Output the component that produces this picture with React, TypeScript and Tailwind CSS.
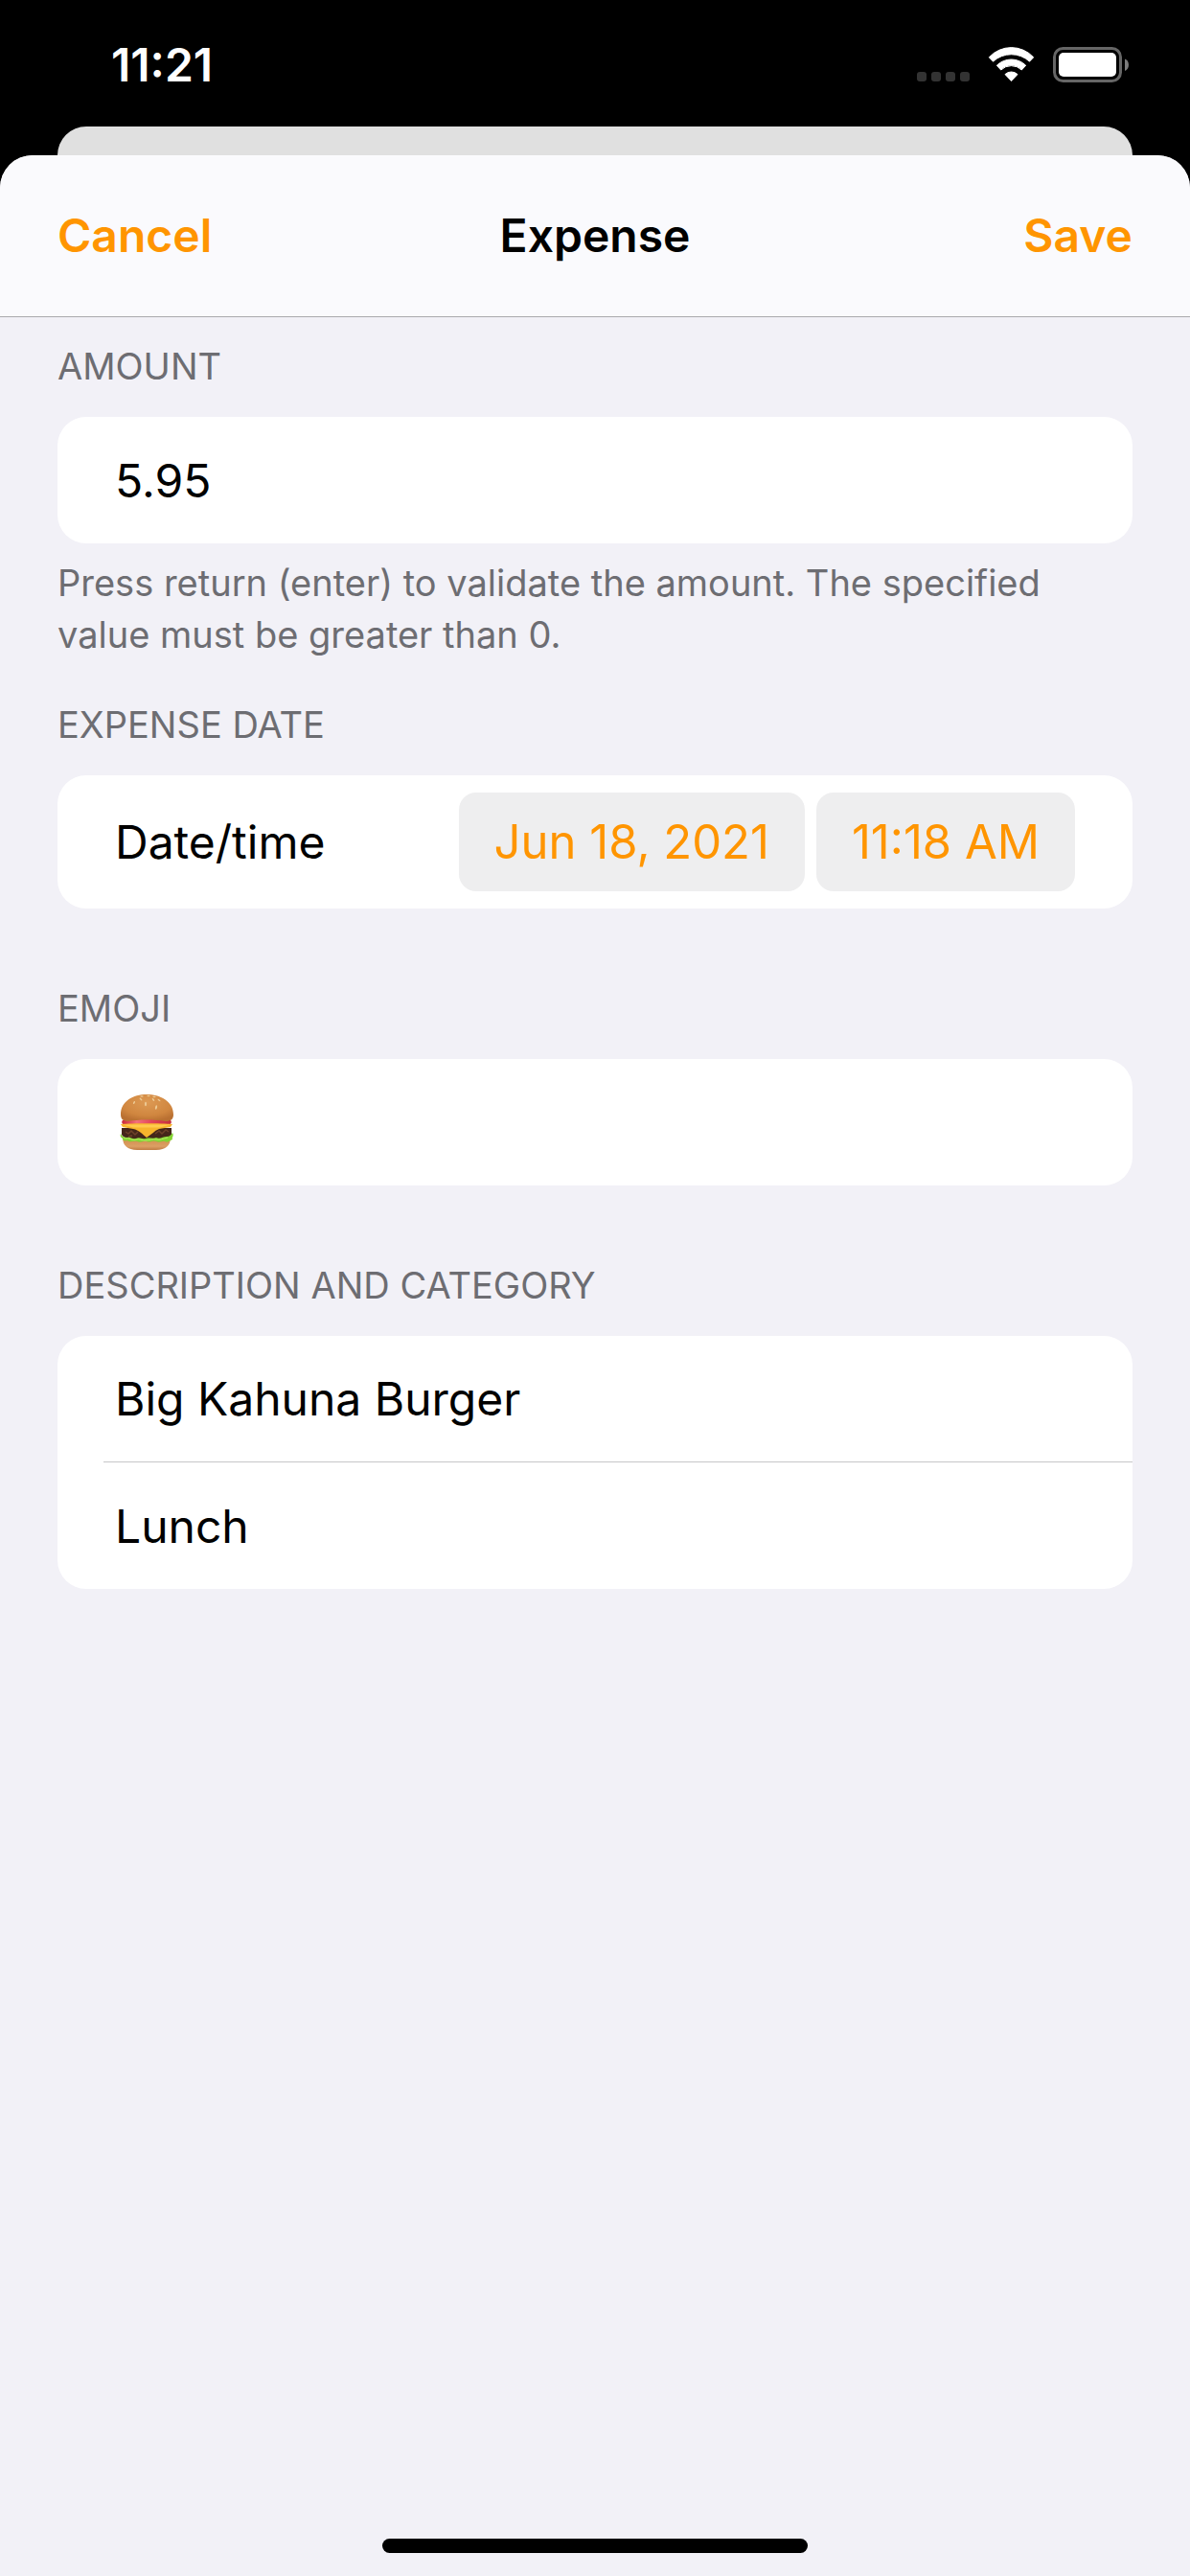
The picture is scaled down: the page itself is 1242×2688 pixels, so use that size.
import React, { useState } from 'react';

interface SectionProps {
  title: string;
  htmlFor: string;
  className?: string;
  footer?: string;
  children: React.ReactNode;
}

const StatusIcons: React.FC = () => (
  <svg width="222" height="38" viewBox="0 0 222 38" aria-hidden="true">
    <g fill="#333333">
      <rect x="0" y="26" width="10" height="10" rx="3" />
      <rect x="15" y="26" width="10" height="10" rx="3" />
      <rect x="30" y="26" width="10" height="10" rx="3" />
      <rect x="45" y="26" width="10" height="10" rx="3" />
    </g>
    <g fill="white" stroke="white" strokeWidth="1" strokeLinejoin="round" transform="translate(74.5 0)">
      <path d="M.8 10.8A31.5 31.5 0 0 1 47.2 10.8L43 15.2A28 28 0 0 0 5 15.2Z" />
      <path d="M8.8 19.3A21.5 21.5 0 0 1 39.2 19.3L34.8 24A15.5 15.5 0 0 0 13.2 24Z" />
      <path d="M17.5 28.6A9.4 9.4 0 0 1 30.5 28.6L24 35.5Z" />
    </g>
    <rect x="143.5" y="1.500" width="69" height="34" rx="9" fill="none" stroke="#666666" strokeWidth="3" />
    <rect x="148" y="6" width="60" height="25" rx="5" fill="white" />
    <path d="M217 12.5C219.6 13.4 221 15.8 221 18.7S219.6 24 217 24.9Z" fill="#7c7c7c" />
  </svg>
);

const BurgerIcon: React.FC = () => (
  <svg width="58" height="60" viewBox="0 0 58 60" aria-hidden="true">
    <defs>
      <radialGradient id="bun" cx="0.5" cy="0.3" r="0.7">
        <stop offset="0" stopColor="#dd9a54" />
        <stop offset="0.7" stopColor="#d0863f" />
        <stop offset="1" stopColor="#b97032" />
      </radialGradient>
      <linearGradient id="base" x1="0" y1="0" x2="0" y2="1">
        <stop offset="0" stopColor="#cf8c4c" />
        <stop offset="0.7" stopColor="#dc9f64" />
        <stop offset="1" stopColor="#c07c42" />
      </linearGradient>
      <linearGradient id="tomato" x1="0" y1="0" x2="1" y2="0">
        <stop offset="0" stopColor="#c9283a" />
        <stop offset="0.3" stopColor="#f2717b" />
        <stop offset="0.6" stopColor="#e2455a" />
        <stop offset="1" stopColor="#c42f3d" />
      </linearGradient>
    </defs>
    <path d="M4 46H54C54 54 49 59 39 59H19C9 59 4 54 4 46Z" fill="url(#base)" />
    <path d="M3 36H55V43C52 48 44 49 29 49S6 48 3 43Z" fill="#45261a" />
    <path d="M7 40l3 2 3-3 4 4 3-3M38 42l4-3 3 3 4-4 3 2M10 45l4-1" stroke="#6f412a" strokeWidth="1.5" fill="none" />
    <path d="M2 42C3 45 6 46 9 46C12 45 14 48 18 47C22 45 24 48 28 47C32 45 35 48 39 46C43 48 46 45 50 45C53 45 55 43 56 41C58 44 55 46 56 48C53 49 52 52 48 50C45 49 43 52 39 50C35 48 33 52 29 50C25 49 23 52 19 50C15 49 12 52 9 49C6 50 4 49 4 47C2 46 1 44 2 42Z" fill="#83d332" />
    <path d="M5 46c3 2 4 0 6 1s4 2 7 1 6 1 10 1 7-2 11-1 7-1 12-2" stroke="#b5ed63" strokeWidth="1" fill="none" />
    <path d="M4 28C8 26 50 26 54 28C56 30 54 33 51 33H7C4 33 2 30 4 28Z" fill="url(#tomato)" />
    <path d="M2 32C14 31 44 31 56 32L54 35L42 37C37 39 34 43 29 46C25 43 21 38 15 37L4 35Z" fill="#f7b52d" />
    <path d="M4 32.5H54L43 35.5H15Z" fill="#ffcb4c" />
    <path d="M2 22C2 8 15 1 29 1S57 8 57 22C57 27 54 29 49 29C36 27 21 27 10 29C5 29 2 27 2 22Z" fill="url(#bun)" />
    <g fill="#edca94">
      <ellipse cx="24" cy="3" rx="1.7" ry="0.8" />
      <ellipse cx="31" cy="2.5" rx="1.7" ry="0.8" />
      <ellipse cx="37" cy="3.5" rx="1.7" ry="0.8" />
      <ellipse cx="16" cy="9.5" rx="0.8" ry="1.6" transform="rotate(30 16 9.5)" />
      <ellipse cx="23" cy="6" rx="0.8" ry="1.8" transform="rotate(-45 23 6)" />
      <ellipse cx="36" cy="6.5" rx="0.8" ry="1.8" transform="rotate(-35 36 6.5)" />
      <ellipse cx="42" cy="7" rx="0.8" ry="1.8" transform="rotate(-50 42 7)" />
      <ellipse cx="28" cy="11" rx="1" ry="2.2" />
      <ellipse cx="39" cy="14.5" rx="1" ry="2.4" transform="rotate(12 39 14.5)" />
    </g>
  </svg>
);

const Section: React.FC<SectionProps> = ({ title, htmlFor, className = '', footer, children }) => (
  <section className={className}>
    <label htmlFor={htmlFor} className="block text-[38px] leading-[52px] text-[#6d6d72] uppercase">{title}</label>
    <div className="mt-[27px] rounded-[30px] bg-white overflow-hidden">{children}</div>
    {footer && <p className="mt-[14px] text-[38px] leading-[54px] text-[#6d6d72]">{footer}</p>}
  </section>
);

const App: React.FC = () => {
  const [amount, setAmount] = useState('5.95');
  const [description, setDescription] = useState('Big Kahuna Burger');
  const [category, setCategory] = useState('Lunch');

  return (
    <div className="min-h-screen flex flex-col bg-black font-['Inter','Liberation_Sans',sans-serif]">
      <div className="h-[132px] pl-[116px] pr-[63px] pt-[49px] flex items-start justify-between">
        <span className="text-[48px] leading-[38px] font-semibold text-white">11:21</span>
        <StatusIcons />
      </div>
      <div className="mx-[60px] h-[30px] rounded-t-[30px] bg-[#e0e0e0]" />

      <div className="flex-1 flex flex-col rounded-t-[34px] bg-[#f2f1f7] overflow-hidden">
        <header className="h-[169px] px-[60px] grid grid-cols-3 items-center bg-[#fafafd] border-b border-[#a9a9ad] text-[48px] leading-[60px] font-semibold">
          <button type="button" className="justify-self-start text-[#ff9500]">Cancel</button>
          <h1 className="text-center text-black">Expense</h1>
          <button type="button" className="justify-self-end text-[#ff9500]">Save</button>
        </header>

        <main className="flex-1 px-[60px] pt-[25px] text-[48px] leading-[60px] text-black">
          <Section
            title="Amount"
            htmlFor="amount"
            footer="Press return (enter) to validate the amount. The specified value must be greater than 0."
          >
            <input
              id="amount" type="text" inputMode="decimal" value={amount} onChange={(e) => setAmount(e.target.value)}
              className="block w-full h-[132px] px-[60px] focus:outline-none"
            />
          </Section>

          <Section title="Expense date" htmlFor="date" className="mt-[41px]">
            <div className="px-[60px] py-[18px] flex items-center justify-between">
              <span>Date/time</span>
              <div className="flex gap-3 text-[49px] text-[#ff9500]">
                <button id="date" type="button" className="h-[103px] px-[37px] rounded-[18px] bg-[#eeeeef]">Jun 18, 2021</button>
                <button type="button" className="h-[103px] px-[37px] rounded-[18px] bg-[#eeeeef]">11:18 AM</button>
              </div>
            </div>
          </Section>

          <Section title="Emoji" htmlFor="emoji" className="mt-[78px]">
            <button id="emoji" type="button" className="w-full h-[132px] px-[64px] flex items-center">
              <BurgerIcon />
            </button>
          </Section>

          <Section title="Description and category" htmlFor="description" className="mt-[78px]">
            <input
              id="description" type="text" value={description} onChange={(e) => setDescription(e.target.value)}
              className="block w-full h-[131px] px-[60px] focus:outline-none"
            />
            <div className="ml-[48px] h-px bg-[#c6c6c8]" />
            <input
              type="text" aria-label="Category" value={category} onChange={(e) => setCategory(e.target.value)}
              className="block w-full h-[132px] px-[60px] focus:outline-none"
            />
          </Section>
        </main>

        <div className="mx-auto mb-6 w-[444px] h-[15px] rounded-full bg-black" />
      </div>
    </div>
  );
};

export default App;
